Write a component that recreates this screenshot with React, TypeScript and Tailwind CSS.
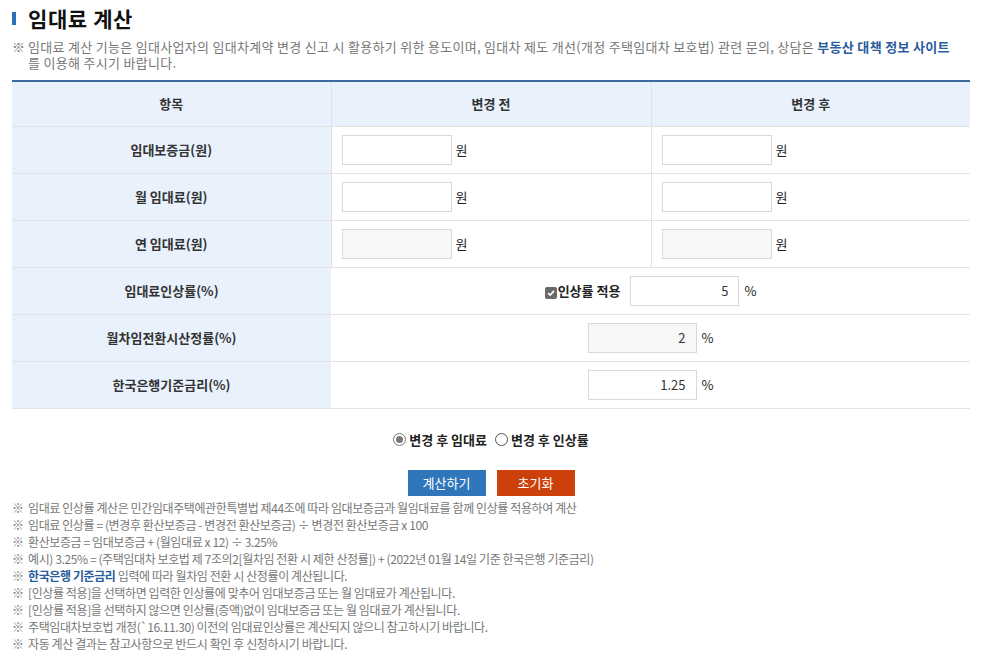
import React from 'react';

const font = { fontFamily: '"Malgun Gothic", "Noto Sans CJK KR", "Noto Sans", sans-serif' };

function Field({ value = '', disabled = false, w = 'w-[110px]', unit }: { value?: string; disabled?: boolean; w?: string; unit: string }) {
  return (
    <span className="inline-flex items-center">
      <input
        readOnly
        value={value}
        className={`${w} h-[30px] border border-[#d9d9d9] px-2.5 text-right text-[13px] text-[#333] outline-none ${disabled ? 'bg-[#f7f7f7]' : 'bg-white'}`}
      />
      <span className={`ml-[4px] text-[13px] text-[#222] ${unit === '%' ? 'ml-[5px]' : ''}`}>{unit}</span>
    </span>
  );
}

const notes: React.ReactNode[] = [
  '임대료 인상률 계산은 민간임대주택에관한특별법 제44조에 따라 임대보증금과 월임대료를 함께 인상률 적용하여 계산',
  '임대료 인상률 = (변경후 환산보증금 - 변경전 환산보증금) ÷ 변경전 환산보증금 x 100',
  '환산보증금 = 임대보증금 + (월임대료 x 12) ÷ 3.25%',
  '예시) 3.25% = (주택임대차 보호법 제 7조의2[월차임 전환 시 제한 산정률]) + (2022년 01월 14일 기준 한국은행 기준금리)',
  <>
    <b className="text-[#2a5d9c]">한국은행 기준금리</b> 입력에 따라 월차임 전환 시 산정률이 계산됩니다.
  </>,
  '[인상률 적용]을 선택하면 입력한 인상률에 맞추어 임대보증금 또는 월 임대료가 계산됩니다.',
  '[인상률 적용]을 선택하지 않으면 인상률(증액)없이 임대보증금 또는 월 임대료가 계산됩니다.',
  '주택임대차보호법 개정(`16.11.30) 이전의 임대료인상률은 계산되지 않으니 참고하시기 바랍니다.',
  '자동 계산 결과는 참고사항으로 반드시 확인 후 신청하시기 바랍니다.',
];

export default function App() {
  const th = 'h-[45px] text-[13px] font-bold text-[#333] bg-[#e8f1fc] border-l border-[#e2e2e2] first:border-l-0';
  const label = 'h-[47px] text-[13px] font-bold text-[#333] bg-[#e8f1fc] text-center';
  const cell = 'h-[47px] pl-[10px] border-l border-[#e2e2e2]';

  return (
    <div className="min-h-screen bg-white pl-3 pr-6 pt-[9px]" style={font}>
      <h1 className="flex items-center gap-[12px] h-[18px] text-[21px] font-bold text-[#111] leading-none tracking-[0.6px]">
        <span className="w-[4px] h-[13px] bg-[#2c6fb5]" />
        임대료 계산
      </h1>

      <div className="mt-[12px] flex text-[13px] leading-[16px] text-[#777] tracking-[0.3px]">
        <span className="w-4 shrink-0">※</span>
        <p>
          임대료 계산 기능은 임대사업자의 임대차계약 변경 신고 시 활용하기 위한 용도이며, 임대차 제도 개선(개정 주택임대차 보호법) 관련 문의, 상담은{' '}
          <b className="text-[#2a5d9c]">부동산 대책 정보 사이트</b>
          <br />를 이용해 주시기 바랍니다.
        </p>
      </div>

      <table className="mt-[9px] w-[958px] border-collapse border-t-2 border-[#3c6c9e] table-fixed">
        <colgroup>
          <col className="w-[319px]" />
          <col className="w-[320px]" />
          <col className="w-[319px]" />
        </colgroup>
        <thead>
          <tr className="border-b border-[#e2e2e2]">
            <th className={th}>항목</th>
            <th className={th}>변경 전</th>
            <th className={th}>변경 후</th>
          </tr>
        </thead>
        <tbody>
          {[
            ['임대보증금(원)', false],
            ['월 임대료(원)', false],
            ['연 임대료(원)', true],
          ].map(([t, d]) => (
            <tr key={t as string} className="border-b border-[#e2e2e2]">
              <td className={label}>{t}</td>
              <td className={cell}>
                <Field unit="원" disabled={d as boolean} />
              </td>
              <td className={cell}>
                <Field unit="원" disabled={d as boolean} />
              </td>
            </tr>
          ))}
          <tr className="border-b border-[#e2e2e2]">
            <td className={label}>임대료인상률(%)</td>
            <td colSpan={2} className="h-[47px] text-center">
              <span className="inline-flex items-center">
                <span className="w-[12px] h-[12px] mt-[4px] rounded-[2px] bg-[#6a6a6a] flex items-center justify-center">
                  <svg viewBox="0 0 12 12" className="w-[10px] h-[10px]">
                    <path d="M2.5 6.2 L5 8.6 L9.6 3.4" fill="none" stroke="#fff" strokeWidth="2" />
                  </svg>
                </span>
                <span className="ml-[1px] mr-[10px] text-[13px] font-bold text-[#222]">인상률 적용</span>
                <Field unit="%" value="5" w="w-[109px]" />
              </span>
            </td>
          </tr>
          <tr className="border-b border-[#e2e2e2]">
            <td className={label}>월차임전환시산정률(%)</td>
            <td colSpan={2} className="h-[47px] text-center">
              <Field unit="%" value="2" disabled w="w-[109px]" />
            </td>
          </tr>
          <tr className="border-b border-[#e2e2e2]">
            <td className={label}>한국은행기준금리(%)</td>
            <td colSpan={2} className="h-[47px] text-center">
              <Field unit="%" value="1.25" w="w-[109px]" />
            </td>
          </tr>
        </tbody>
      </table>

      <div className="w-[958px] mt-[21px] flex justify-center items-center gap-[8px] text-[13px] font-bold text-[#222]">
        <label className="flex items-center gap-[3px]">
          <span className="w-[13px] h-[13px] rounded-full border border-[#777] flex items-center justify-center">
            <span className="w-[7px] h-[7px] rounded-full bg-[#777]" />
          </span>
          변경 후 임대료
        </label>
        <label className="flex items-center gap-[3px]">
          <span className="w-[13px] h-[13px] rounded-full border border-[#555] bg-white" />
          변경 후 인상률
        </label>
      </div>

      <div className="w-[958px] mt-[21px] flex justify-center gap-[11px]">
        <button className="w-[78px] h-[26px] bg-[#2f76bb] text-white text-[13px]">계산하기</button>
        <button className="w-[78px] h-[26px] bg-[#cc410b] text-white text-[13px]">초기화</button>
      </div>

      <ul className="mt-[3px] text-[12px] leading-[17px] text-[#777] tracking-[-0.4px]">
        {notes.map((n, i) => (
          <li key={i} className="flex">
            <span className="w-4 shrink-0">※</span>
            <span>{n}</span>
          </li>
        ))}
      </ul>
    </div>
  );
}
